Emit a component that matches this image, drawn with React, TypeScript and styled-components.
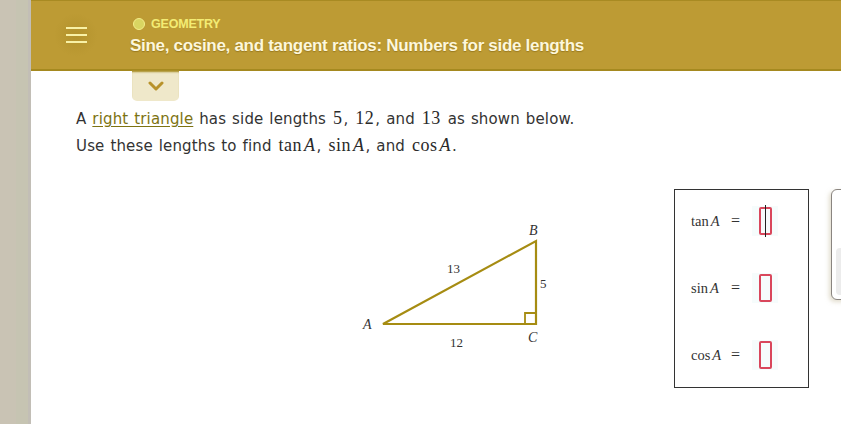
import React from "react";
import styled, { createGlobalStyle } from "styled-components";

const GlobalStyle = createGlobalStyle`
  html, body {
    margin: 0;
    padding: 0;
    background: #ffffff;
  }
  body {
    font-family: "DejaVu Sans", Verdana, sans-serif;
  }
`;

const Page = styled.div`
  display: flex;
  width: 841px;
  height: 424px;
  overflow: hidden;
`;

const SideStrip = styled.div`
  flex: none;
  width: 31px;
  background: linear-gradient(to right, #c9c3b4 0, #c9c3b4 16px, #c6c4b2 16px, #c6c4b2 28px, #c2beb6 28px);
`;

const Main = styled.div`
  flex: 1;
  display: flex;
  flex-direction: column;
  min-width: 0;
`;

const Header = styled.header`
  position: relative;
  display: flex;
  align-items: center;
  height: 71px;
  flex: none;
  background: #bd9b34;
  border-top: 1px solid #a88a22;
  border-bottom: 2px solid #a5891f;
  box-sizing: border-box;
`;

const MenuButton = styled.div`
  flex: none;
  width: 44px;
  height: 44px;
  margin-left: 23px;
  margin-right: 32px;
  display: flex;
  flex-direction: column;
  justify-content: center;
  align-items: center;
  gap: 5px;
  border-radius: 50%;
  background: radial-gradient(circle, rgba(160, 130, 30, 0.35) 0, rgba(189, 155, 52, 0) 70%);
`;

const MenuLine = styled.span`
  display: block;
  width: 21px;
  height: 2px;
  background: #f8f1a6;
`;

const TitleBlock = styled.div`
  display: flex;
  flex-direction: column;
  gap: 5px;
  margin-top: 3px;
`;

const Subject = styled.div`
  display: flex;
  align-items: center;
  gap: 6px;
  padding-left: 3px;
  font-family: "Liberation Sans", Arial, sans-serif;
  font-weight: bold;
  font-size: 12.5px;
  color: #f3ec74;
  letter-spacing: -0.2px;
`;

const Dot = styled.span`
  width: 10px;
  height: 10px;
  border-radius: 50%;
  background: #d9d561;
  border: 1.5px solid #f4ee8a;
`;

const Title = styled.h1`
  margin: 0;
  font-family: "Liberation Sans", Arial, sans-serif;
  font-weight: bold;
  font-size: 17px;
  letter-spacing: -0.3px;
  color: #fdf7dc;
  text-shadow: 0 1px 1px rgba(120, 90, 10, 0.5);
`;

const Toggle = styled.div`
  position: absolute;
  left: 101px;
  top: 69px;
  width: 47px;
  height: 31px;
  background: #efe8ca;
  border-radius: 0 0 5px 5px;
  box-shadow: inset 0 3px 2px -1px #a5891f;
  display: flex;
  align-items: center;
  justify-content: center;
`;

const Content = styled.div`
  flex: 1;
  padding: 34px 0 0 45px;
`;

const Prompt = styled.p`
  margin: 0;
  font-size: 15px;
  line-height: 26px;
  color: #333333;
  letter-spacing: 0.15px;
  word-spacing: 1px;
`;

const TermLink = styled.a`
  color: #7d7312;
  text-decoration: underline;
  text-underline-offset: 2px;
`;

const Math = styled.span`
  font-family: "Liberation Serif", "Times New Roman", serif;
  font-size: 18px;
  letter-spacing: 0.5px;
  color: #2a2a2a;
  margin: 0 1px;
`;

const Var = styled.i`
  font-family: "Liberation Serif", "Times New Roman", serif;
  margin-left: 2px;
`;

const Workspace = styled.div`
  display: flex;
  align-items: flex-start;
  margin-top: 30px;
  margin-left: 264px;
`;

const Figure = styled.svg`
  flex: none;
  display: block;
`;

const AnswerBox = styled.div`
  flex: none;
  width: 135px;
  height: 199px;
  margin-left: 109px;
  border: 1px solid #333;
  display: flex;
  flex-direction: column;
  padding: 17px 0 0 16px;
  box-sizing: border-box;
  gap: 39px;
`;

const AnswerRow = styled.div`
  display: flex;
  align-items: center;
  height: 28px;
  font-family: "Liberation Serif", "Times New Roman", serif;
  font-size: 14.5px;
  color: #333;
`;

const Label = styled.span`
  width: 40px;
`;

const Eq = styled.span`
  width: 21px;
  font-size: 16px;
`;

const SlotWrap = styled.span`
  display: flex;
  align-items: center;
  justify-content: center;
  width: 26px;
  height: 30px;
  background: #f6fcfc;
`;

const Slot = styled.span<{ $active?: boolean }>`
  position: relative;
  display: block;
  width: 9px;
  height: 24px;
  border: 2px solid #d9475c;
  border-radius: 2px;
  &::after {
    content: "";
    display: ${(p) => (p.$active ? "block" : "none")};
    position: absolute;
    left: 4px;
    top: -4px;
    width: 1px;
    height: 32px;
    background: #222;
  }
`;

const SidePanel = styled.div`
  flex: none;
  width: 60px;
  height: 111px;
  margin-left: 22px;
  border: 1px solid #8a8580;
  border-radius: 6px;
  background: #ffffff;
  box-shadow: -2px 2px 4px rgba(200, 190, 160, 0.5);
  padding: 58px 0 4px 4px;
  box-sizing: border-box;
`;

const PanelInset = styled.div`
  height: 100%;
  background: #ececec;
  border-radius: 4px 0 0 4px;
`;

const Func = ({ name }: { name: string }) => (
  <Math>
    {name}
    <Var>A</Var>
  </Math>
);

const lineColor = "#a68c12";

export default function App() {
  return (
    <>
      <GlobalStyle />
      <Page>
        <SideStrip />
        <Main>
          <Header>
            <MenuButton>
              <MenuLine />
              <MenuLine />
              <MenuLine />
            </MenuButton>
            <TitleBlock>
              <Subject>
                <Dot />
                GEOMETRY
              </Subject>
              <Title>Sine, cosine, and tangent ratios: Numbers for side lengths</Title>
            </TitleBlock>
            <Toggle>
              <svg width="16" height="10" viewBox="0 0 16 10">
                <path d="M2 2l6 6 6-6" fill="none" stroke="#b8922a" strokeWidth="3" strokeLinecap="round" strokeLinejoin="round" />
              </svg>
            </Toggle>
          </Header>
          <Content>
            <Prompt>
              A <TermLink>right triangle</TermLink> has side lengths <Math>5</Math>, <Math>12</Math>, and{" "}
              <Math>13</Math> as shown below.
              <br />
              Use these lengths to find <Func name="tan" />, <Func name="sin" />, and <Func name="cos" />.
            </Prompt>
            <Workspace>
              <Figure width="225" height="180" viewBox="0 0 225 180">
                <g fill="none" stroke={lineColor} strokeWidth="2.2" strokeLinejoin="miter">
                  <path d="M43 135 L196 52 L196 135 Z" />
                  <path d="M185 135 V124 H196" strokeWidth="1.8" />
                </g>
                <g fontFamily="'Liberation Serif', 'Times New Roman', serif" fontSize="13" fill="#333">
                  <text x="189" y="46" fontSize="14" fontStyle="italic">B</text>
                  <text x="23" y="140" fontSize="14" fontStyle="italic">A</text>
                  <text x="188" y="153" fontSize="14" fontStyle="italic">C</text>
                  <text x="107" y="84">13</text>
                  <text x="200" y="99">5</text>
                  <text x="110" y="158">12</text>
                </g>
              </Figure>
              <AnswerBox>
                <AnswerRow>
                  <Label>
                    tan<Var>A</Var>
                  </Label>
                  <Eq>=</Eq>
                  <SlotWrap>
                    <Slot $active />
                  </SlotWrap>
                </AnswerRow>
                <AnswerRow>
                  <Label>
                    sin<Var>A</Var>
                  </Label>
                  <Eq>=</Eq>
                  <SlotWrap>
                    <Slot />
                  </SlotWrap>
                </AnswerRow>
                <AnswerRow>
                  <Label>
                    cos<Var>A</Var>
                  </Label>
                  <Eq>=</Eq>
                  <SlotWrap>
                    <Slot />
                  </SlotWrap>
                </AnswerRow>
              </AnswerBox>
              <SidePanel>
                <PanelInset />
              </SidePanel>
            </Workspace>
          </Content>
        </Main>
      </Page>
    </>
  );
}
